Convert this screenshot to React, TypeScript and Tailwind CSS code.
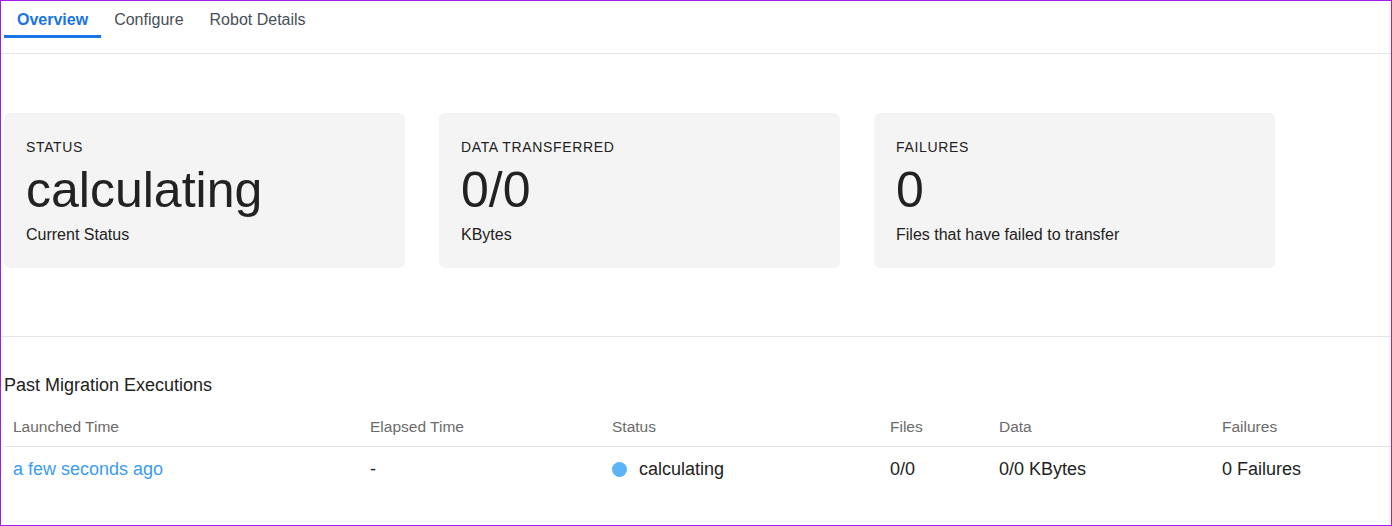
import React from 'react';

interface StatCard {
  label: string;
  value: string;
  caption: string;
}

const cards: StatCard[] = [
  { label: 'STATUS', value: 'calculating', caption: 'Current Status' },
  { label: 'DATA TRANSFERRED', value: '0/0', caption: 'KBytes' },
  { label: 'FAILURES', value: '0', caption: 'Files that have failed to transfer' },
];

const tabs = ['Overview', 'Configure', 'Robot Details'];

const columns = ['Launched Time', 'Elapsed Time', 'Status', 'Files', 'Data', 'Failures'];

const gridCols = 'grid grid-cols-[357px_242px_278px_109px_223px_1fr]';

function App() {
  return (
    <div
      className="w-[1392px] h-[526px] overflow-hidden bg-white border border-[#a21cf0] text-[#222]"
      style={{ fontFamily: '"Liberation Sans", Arial, sans-serif' }}
    >
      {/* Tabs */}
      <div className="h-[53px] border-b border-[#e6e6e6] flex items-start pl-[3px]">
        {tabs.map((tab, i) => (
          <div
            key={tab}
            className={
              i === 0
                ? 'h-[37px] px-[13px] pt-[3px] flex items-center text-[16px] font-bold text-[#1a73e8] border-b-[3px] border-[#1a73e8]'
                : 'h-[37px] px-[13px] flex items-center text-[16px] text-[#474f57]'
            }
          >
            {tab}
          </div>
        ))}
      </div>

      {/* Stat cards */}
      <div className="flex gap-[34px] pl-[3px] pt-[59px] pb-[68px] border-b border-[#e6e6e6]">
        {cards.map((card) => (
          <div key={card.label} className="w-[401px] h-[155px] rounded-[6px] bg-[#f4f4f4] pl-[22px] pt-[26px] flex flex-col">
            <div className="text-[14px] leading-[16px] tracking-[0.65px] text-[#222]">{card.label}</div>
            <div className="mt-[10px] text-[50px] leading-[50px] text-[#222]">{card.value}</div>
            <div className="mt-[10px] text-[16px] leading-[20px] text-[#222]">{card.caption}</div>
          </div>
        ))}
      </div>

      {/* Past executions */}
      <div className="pl-[3px]">
        <div className="mt-[37px] text-[18px] leading-[22px] text-[#222]">Past Migration Executions</div>
        <div className={`${gridCols} mt-[11px] h-[40px] items-center border-b border-[#e3e3e3] text-[15.5px] text-[#6b6b6b]`}>
          {columns.map((col) => (
            <div key={col} className="pl-[9px]">{col}</div>
          ))}
        </div>
        <div className={`${gridCols} h-[44px] pt-[1px] items-center text-[18px] text-[#222]`}>
          <div className="pl-[9px] text-[#3b9cf2]">a few seconds ago</div>
          <div className="pl-[9px]">-</div>
          <div className="pl-[9px] flex items-center gap-[12px]">
            <span className="w-[15px] h-[15px] rounded-full bg-[#5cb3f8]" />
            <span>calculating</span>
          </div>
          <div className="pl-[9px]">0/0</div>
          <div className="pl-[9px]">0/0 KBytes</div>
          <div className="pl-[9px]">0 Failures</div>
        </div>
      </div>
    </div>
  );
}

export default App;
